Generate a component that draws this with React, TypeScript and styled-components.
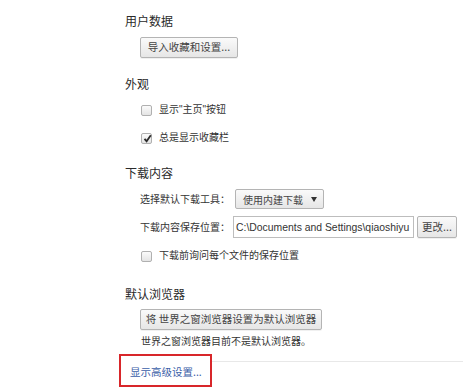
import React from "react";
import styled, { createGlobalStyle } from "styled-components";

const Global = createGlobalStyle`
  html, body { margin: 0; padding: 0; background: #fff; }
  body { font-family: "Noto Sans CJK SC", "Liberation Sans", sans-serif; color: #333; }
`;

const Page = styled.div`
  width: 463px;
  height: 392px;
  overflow: hidden;
  box-sizing: border-box;
  padding: 13px 0 0 125px;
  display: flex;
  flex-direction: column;
`;

const Heading = styled.div<{ $mt?: number }>`
  font-size: 12px;
  line-height: 16px;
  height: 16px;
  color: #2a2a2a;
  margin-top: ${(p) => p.$mt ?? 0}px;
`;

const Indent = styled.div<{ $mt?: number }>`
  margin-left: 15px;
  margin-top: ${(p) => p.$mt ?? 0}px;
  display: flex;
  align-items: center;
  font-size: 10px;
  color: #333;
`;

const Button = styled.button<{ $w: number; $h: number }>`
  width: ${(p) => p.$w}px;
  height: ${(p) => p.$h}px;
  padding: 0;
  border: 1px solid #b4b4b4;
  border-radius: 2px;
  background: linear-gradient(#fafafa, #e6e6e6);
  box-shadow: 0 1px 0 rgba(0, 0, 0, 0.06);
  font-family: "Noto Sans CJK SC", sans-serif;
  font-size: 10.5px;
  line-height: 1;
  color: #444;
  display: flex;
  align-items: center;
  justify-content: center;
  flex-shrink: 0;
  white-space: nowrap;
`;

const Box = styled.span`
  width: 11px;
  height: 11px;
  box-sizing: border-box;
  border: 1px solid #b0b0b0;
  border-radius: 2px;
  background: linear-gradient(#fbfbfb, #e4e4e4);
  margin: 0 7px 0 1px;
  position: relative;
  flex-shrink: 0;
  svg { position: absolute; left: 0; top: -1px; }
`;

const Label = styled.span`
  font-family: "Liberation Sans", "Noto Sans CJK SC", sans-serif;
  font-size: 10px;
  line-height: 16px;
  white-space: nowrap;
`;

const FieldLabel = styled(Label)<{ $w: number }>`
  width: ${(p) => p.$w}px;
  font-family: "Noto Sans CJK SC", sans-serif;
`;

const Select = styled.div`
  width: 89px;
  height: 20px;
  box-sizing: border-box;
  border: 1px solid #b4b4b4;
  border-radius: 2px;
  background: linear-gradient(#fafafa, #e6e6e6);
  display: flex;
  align-items: center;
  padding-left: 7px;
  font-size: 10px;
  color: #444;
  gap: 8px;
  white-space: nowrap;
`;

const Caret = styled.span`
  width: 0;
  height: 0;
  border-left: 3.5px solid transparent;
  border-right: 3.5px solid transparent;
  border-top: 5px solid #333;
`;

const Input = styled.div`
  width: 181px;
  height: 22px;
  box-sizing: border-box;
  border: 1px solid #bdbdbd;
  display: flex;
  align-items: center;
  padding-left: 2px;
  font-family: "Liberation Sans", Arial, sans-serif;
  font-size: 10.4px;
  color: #333;
  white-space: nowrap;
  overflow: hidden;
  margin-right: 3px;
`;

const Note = styled.div`
  margin: 3px 0 0 16px;
  font-size: 10px;
  line-height: 16px;
  color: #333;
`;

const Footer = styled.div`
  margin: 5px 0 0 -6px;
  display: flex;
  align-items: flex-start;
`;

const Highlight = styled.div`
  width: 93px;
  height: 33px;
  box-sizing: border-box;
  border: 2px solid #d8262a;
  display: flex;
  align-items: flex-end;
  padding: 0 0 6px 9px;
  flex-shrink: 0;
`;

const Link = styled.a`
  font-size: 10.5px;
  line-height: 14px;
  color: #3b5ea8;
  text-decoration: none;
  white-space: nowrap;
`;

const Rule = styled.div`
  flex: 1;
  height: 1px;
  background: #e8e8e8;
  margin-top: 7px;
`;

const Check = () => (
  <svg width="11" height="11" viewBox="0 0 11 11">
    <path d="M2.5 5.8 L4.6 8.2 L8.8 2.2" fill="none" stroke="#2b2b2b" strokeWidth="1.8" />
  </svg>
);

export default function App() {
  return (
    <>
      <Global />
      <Page>
        <Heading>用户数据</Heading>
        <Indent $mt={8}>
          <Button $w={98} $h={21}>导入收藏和设置...</Button>
        </Indent>

        <Heading $mt={18}>外观</Heading>
        <Indent $mt={10}>
          <Box />
          <Label>显示"主页"按钮</Label>
        </Indent>
        <Indent $mt={12}>
          <Box>
            <Check />
          </Box>
          <Label>总是显示收藏栏</Label>
        </Indent>

        <Heading $mt={19}>下载内容</Heading>
        <Indent $mt={8}>
          <FieldLabel $w={95}>选择默认下载工具：</FieldLabel>
          <Select>
            使用内建下载
            <Caret />
          </Select>
        </Indent>
        <Indent $mt={7}>
          <FieldLabel $w={93}>下载内容保存位置：</FieldLabel>
          <Input>C:\Documents and Settings\qiaoshiyu</Input>
          <Button $w={40} $h={22}>更改...</Button>
        </Indent>
        <Indent $mt={10}>
          <Box />
          <Label>下载前询问每个文件的保存位置</Label>
        </Indent>

        <Heading $mt={22}>默认浏览器</Heading>
        <Indent $mt={7}>
          <Button $w={182} $h={21}>将 世界之窗浏览器设置为默认浏览器</Button>
        </Indent>
        <Note>世界之窗浏览器目前不是默认浏览器。</Note>

        <Footer>
          <Highlight>
            <Link href="#">显示高级设置...</Link>
          </Highlight>
          <Rule />
        </Footer>
      </Page>
    </>
  );
}
